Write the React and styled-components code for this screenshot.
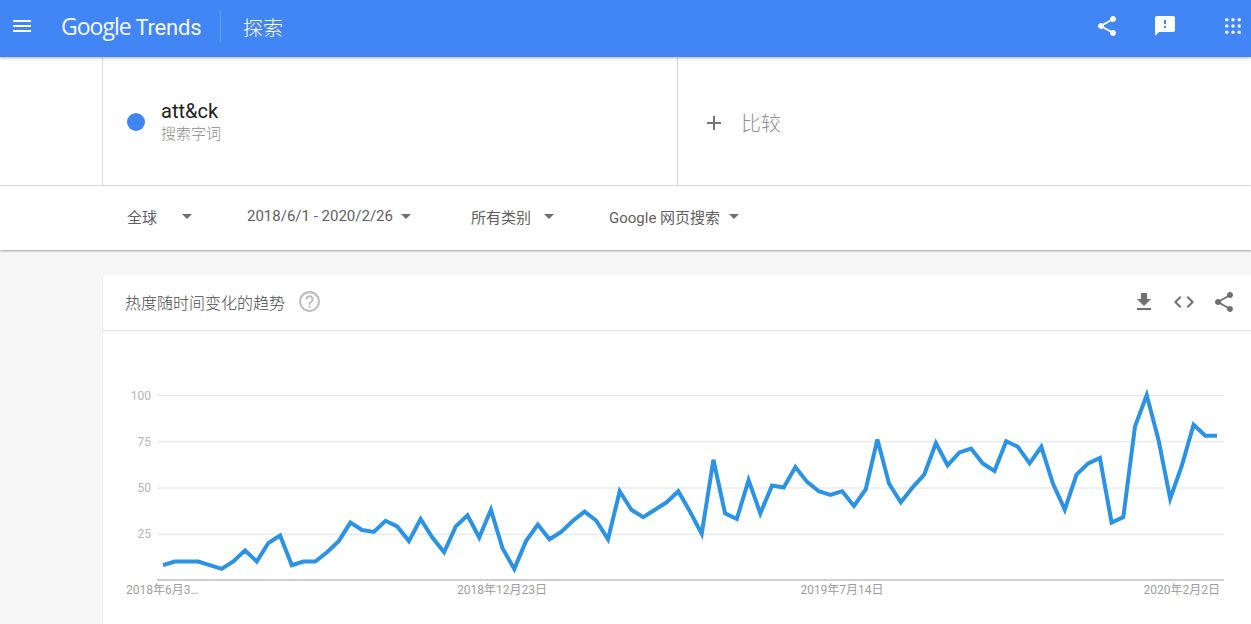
import styled, { createGlobalStyle } from "styled-components";
import {
  MdMenu,
  MdShare,
  MdFeedback,
  MdFileDownload,
  MdCode,
  MdAdd,
  MdHelpOutline,
} from "react-icons/md";

const values = [
  8, 10, 10, 10, 8, 6, 10, 16, 10, 20, 24, 8, 10, 10, 15, 21, 31, 27, 26, 32, 29,
  21, 33, 23, 15, 29, 35, 23, 38, 17, 6, 21, 30, 22, 26, 32, 37, 32, 22, 48, 38,
  34, 38, 42, 48, 37, 25, 65, 36, 33, 54, 36, 51, 50, 61, 53, 48, 46, 48, 40, 49,
  76, 52, 42, 50, 57, 74, 62, 69, 71, 63, 59, 75, 72, 63, 72, 52, 38, 57, 63, 66,
  31, 34, 83, 100, 76, 44, 62, 84, 78, 78,
];

const toX = (i) => 163 + (i * (1217 - 163)) / (values.length - 1);
const toY = (v) => 580 - v * 1.85;
const linePoints = values.map((v, i) => `${toX(i).toFixed(1)},${toY(v).toFixed(1)}`).join(" ");

const App = () => {
  return (
    <Page>
      <GlobalStyle />
      <Header>
        <HeaderIcon>
          <MdMenu size={24} />
        </HeaderIcon>
        <Logo>
          <strong>Google</strong> Trends
        </Logo>
        <HeaderTitle>探索</HeaderTitle>
        <HeaderActions>
          <MdShare size={24} />
          <MdFeedback size={24} />
          <AppsIcon viewBox="0 0 18 18">
            {[2, 9, 16].map((y) =>
              [2, 9, 16].map((x) => <circle key={`${x}-${y}`} cx={x} cy={y} r="2" />)
            )}
          </AppsIcon>
        </HeaderActions>
      </Header>

      <SearchRow>
        <TermCell>
          <TermDot />
          <div>
            <TermName>att&amp;ck</TermName>
            <TermType>搜索字词</TermType>
          </div>
        </TermCell>
        <CompareCell>
          <MdAdd size={24} />
          <span>比较</span>
        </CompareCell>
      </SearchRow>

      <FilterBar>
        <Filter $width={120} $gap={25}>全球<Caret /></Filter>
        <Filter $width={224} $gap={8}>2018/6/1 - 2020/2/26<Caret /></Filter>
        <Filter $width={138} $gap={13}>所有类别<Caret /></Filter>
        <Filter $gap={9}>Google 网页搜索<Caret /></Filter>
      </FilterBar>

      <Content>
        <Card>
          <CardHeader>
            <CardTitle>热度随时间变化的趋势</CardTitle>
            <HelpIcon>
              <MdHelpOutline size={25} />
            </HelpIcon>
            <CardActions>
              <MdFileDownload size={24} />
              <MdCode size={24} />
              <MdShare size={24} />
            </CardActions>
          </CardHeader>
          <Chart viewBox="102 331 1149 293">
            {[100, 75, 50, 25].map((v) => (
              <g key={v}>
                <line x1="157" x2="1224" y1={toY(v) + 0.5} y2={toY(v) + 0.5} stroke="#e2e2e2" />
                <YLabel x="151" y={toY(v) + 4.5} textAnchor="end">{v}</YLabel>
              </g>
            ))}
            <line x1="157" x2="1224" y1="580" y2="580" stroke="#9e9e9e" />
            <polyline points={linePoints} fill="none" stroke="#2b93e6" strokeWidth="4" strokeLinejoin="miter" />
            <XLabel x="126" y="594">2018年6月3…</XLabel>
            <XLabel x="502" y="594" textAnchor="middle">2018年12月23日</XLabel>
            <XLabel x="842" y="594" textAnchor="middle">2019年7月14日</XLabel>
            <XLabel x="1220" y="594" textAnchor="end">2020年2月2日</XLabel>
          </Chart>
        </Card>
      </Content>
    </Page>
  );
};

export default App;

const cjkSans = `Roboto, "Noto Sans CJK SC", sans-serif`;

const GlobalStyle = createGlobalStyle`
  html, body {
    margin: 0;
    height: 100%;
    overflow: hidden;
  }
  body {
    font-family: ${cjkSans};
    background: #fff;
  }
`;

const Page = styled.div`
  display: flex;
  flex-direction: column;
  height: 624px;
  overflow: hidden;
`;

const Header = styled.header`
  position: relative;
  z-index: 3;
  flex: none;
  display: flex;
  align-items: center;
  height: 57px;
  padding-bottom: 6px;
  box-sizing: border-box;
  background: #4285f4;
  color: #fff;
  box-shadow: 0 1px 3px rgba(0, 0, 0, 0.3);
`;

const HeaderIcon = styled.div`
  display: flex;
  margin-left: 10px;
`;

const Logo = styled.div`
  margin-left: 27px;
  width: 159px;
  height: 32px;
  line-height: 32px;
  border-right: 1px solid rgba(255, 255, 255, 0.2);
  font-size: 22px;
  letter-spacing: -0.2px;
  white-space: nowrap;
  opacity: 0.95;

  strong {
    font-family: "Open Sans", sans-serif;
    font-weight: 400;
    font-size: 23px;
    letter-spacing: -1px;
  }
`;

const HeaderTitle = styled.div`
  margin-left: 22px;
  font-size: 20px;
  font-weight: 300;
  padding-top: 3px;
`;

const HeaderActions = styled.div`
  margin-left: auto;
  margin-right: 10px;
  display: flex;
  align-items: center;
  gap: 34px;
`;

const AppsIcon = styled.svg`
  width: 16px;
  height: 16px;
  margin-left: 14px;
  fill: rgba(255, 255, 255, 0.9);
`;

const SearchRow = styled.section`
  flex: none;
  display: flex;
  height: 129px;
  padding-left: 102px;
  box-sizing: border-box;
  border-bottom: 1px solid #dcdcdc;
`;

const TermCell = styled.div`
  display: flex;
  align-items: center;
  width: 576px;
  box-sizing: border-box;
  padding-left: 24px;
  border-left: 1px solid #d8d8d8;
  border-right: 1px solid #d8d8d8;
`;

const TermDot = styled.span`
  width: 18px;
  height: 18px;
  margin: 2px 16px 0 0;
  border-radius: 50%;
  background: #4285f4;
`;

const TermName = styled.div`
  font-size: 20px;
  line-height: 24px;
  color: #212121;
  margin-top: 3px;
`;

const TermType = styled.div`
  font-size: 15px;
  line-height: 23px;
  font-weight: 300;
  color: #8a8a8a;
`;

const CompareCell = styled.div`
  display: flex;
  align-items: center;
  gap: 15px;
  padding: 3px 0 0 24px;
  color: #757575;

  span {
    font-size: 20px;
    font-weight: 300;
    color: #8f8f8f;
  }
`;

const FilterBar = styled.section`
  position: relative;
  z-index: 2;
  flex: none;
  display: flex;
  align-items: center;
  height: 64px;
  padding: 0 0 4px 127px;
  box-sizing: border-box;
  background: #fff;
  box-shadow: 0 1px 2px rgba(0, 0, 0, 0.35);
`;

const Filter = styled.div`
  display: flex;
  align-items: center;
  flex: none;
  width: ${(p) => (p.$width ? `${p.$width}px` : "auto")};
  font-size: 15px;
  color: #5f5f5f;

  span {
    margin-left: ${(p) => p.$gap}px;
  }
`;

const Caret = styled.span`
  width: 0;
  height: 0;
  border-left: 5px solid transparent;
  border-right: 5px solid transparent;
  border-top: 5px solid #6f6f6f;
`;

const Content = styled.main`
  flex: 1;
  min-height: 0;
  padding: 25px 0 0 102px;
  background: #f6f6f6;
`;

const Card = styled.article`
  height: 100%;
  background: #fff;
  border-left: 1px solid #eee;
  box-sizing: border-box;
`;

const CardHeader = styled.div`
  display: flex;
  align-items: center;
  height: 56px;
  padding: 0 0 1px 22px;
  box-sizing: border-box;
  border-bottom: 1px solid #e0e0e0;
`;

const CardTitle = styled.h2`
  margin: 0;
  font-size: 16px;
  font-weight: 300;
  color: #4a4a4a;
`;

const HelpIcon = styled.div`
  display: flex;
  margin-left: 12px;
  margin-top: -2px;
  color: #bdbdbd;
`;

const CardActions = styled.div`
  margin-left: auto;
  margin-right: 15px;
  display: flex;
  align-items: center;
  gap: 16px;
  color: #6f6f6f;
`;

const Chart = styled.svg`
  display: block;
  width: 1149px;
  height: 293px;
  margin-left: -1px;
`;

const YLabel = styled.text`
  font-size: 12px;
  fill: #b5b5b5;
`;

const XLabel = styled.text`
  font-size: 12px;
  fill: #9e9e9e;
`;
